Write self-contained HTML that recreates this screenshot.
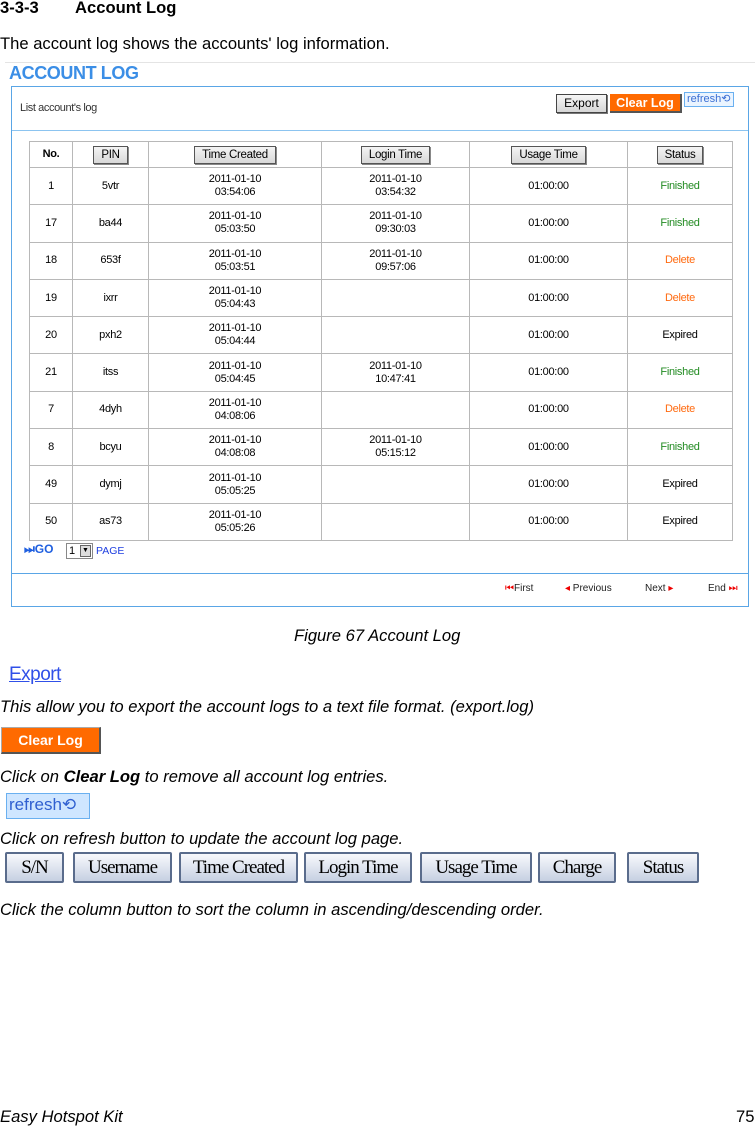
<!DOCTYPE html>
<html><head><meta charset="utf-8"><style>
*{margin:0;padding:0;box-sizing:border-box}
body{width:755px;height:1127px;background:#fff;font-family:"Liberation Sans",sans-serif;position:relative;overflow:hidden;color:#000}
.a{position:absolute;white-space:nowrap}
.it{font-style:italic;font-size:16.6px}
table{border-collapse:collapse;position:absolute;left:29px;top:141px;width:704px;font-size:11px;font-family:"Liberation Sans",sans-serif}
td{border:1px solid #b8b8b8;text-align:center;height:37.3px;line-height:13px;letter-spacing:-0.3px}
tr.h td{height:26px}
.b{display:inline-block;border:1px solid #555;background:linear-gradient(#f4f4f4,#d8d8d8);padding:1px 7px;font-size:11.5px;line-height:14px;box-shadow:1px 1px 0 #888}
.g{color:#228b22}.o{color:#ff6a10}
.sb{display:inline-block;position:absolute;top:852px;height:31px;border:2px solid #5a6c8c;border-radius:2px;background:linear-gradient(#f8f9fc,#c6d0e2);font-family:"Liberation Serif",serif;font-size:19px;line-height:27px;text-align:center;letter-spacing:-1px}
</style></head><body>
<div class="a" style="left:0;top:-2px;font-weight:bold;font-size:16.6px">3-3-3</div>
<div class="a" style="left:75px;top:-2px;font-weight:bold;font-size:16.6px">Account Log</div>
<div class="a" style="left:0;top:34px;font-size:16.6px">The account log shows the accounts' log information.</div>
<div class="a" style="left:5px;top:62px;width:750px;height:1px;background:#e4e4e4"></div>
<div class="a" style="left:9px;top:63px;font-weight:bold;font-size:18px;color:#3b8ee6;letter-spacing:-0.4px">ACCOUNT LOG</div>
<div class="a" style="left:11px;top:86px;width:738px;height:521px;border:1px solid #5aa6e6"></div>
<div class="a" style="left:12px;top:130px;width:736px;height:1px;background:#8cc4f0"></div>
<div class="a" style="left:12px;top:573px;width:736px;height:1px;background:#5aa6e6"></div>
<div class="a" style="left:20px;top:102px;font-size:11px;color:#333;letter-spacing:-0.4px">List account's log</div>
<div class="a" style="left:556px;top:94px;width:51px;height:19px;border:1px solid #444;background:linear-gradient(#f6f6f6,#d6d6d6);font-size:12px;line-height:17px;text-align:center;box-shadow:1px 1px 0 #777">Export</div>
<div class="a" style="left:610px;top:94px;width:72px;height:19px;background:#ff6a00;border-right:2px solid #555;border-bottom:2px solid #555;color:#fff;font-size:12.5px;line-height:18px;text-align:center;font-weight:bold">Clear Log</div>
<div class="a" style="left:684px;top:92px;width:50px;height:15px;border:1px solid #6ab0f0;background:#eaf4ff;color:#3b6fd4;font-size:11px;line-height:13px;padding-left:2px">refresh⟲</div>
<table>
<tr class="h"><td style="width:43px;font-weight:bold">No.</td><td style="width:76px"><span class="b">PIN</span></td><td style="width:173px"><span class="b">Time Created</span></td><td style="width:148px"><span class="b">Login Time</span></td><td style="width:158px"><span class="b">Usage Time</span></td><td><span class="b">Status</span></td></tr>
<tr><td>1</td><td>5vtr</td><td>2011-01-10<br>03:54:06</td><td>2011-01-10<br>03:54:32</td><td>01:00:00</td><td class="g">Finished</td></tr>
<tr><td>17</td><td>ba44</td><td>2011-01-10<br>05:03:50</td><td>2011-01-10<br>09:30:03</td><td>01:00:00</td><td class="g">Finished</td></tr>
<tr><td>18</td><td>653f</td><td>2011-01-10<br>05:03:51</td><td>2011-01-10<br>09:57:06</td><td>01:00:00</td><td class="o">Delete</td></tr>
<tr><td>19</td><td>ixrr</td><td>2011-01-10<br>05:04:43</td><td></td><td>01:00:00</td><td class="o">Delete</td></tr>
<tr><td>20</td><td>pxh2</td><td>2011-01-10<br>05:04:44</td><td></td><td>01:00:00</td><td>Expired</td></tr>
<tr><td>21</td><td>itss</td><td>2011-01-10<br>05:04:45</td><td>2011-01-10<br>10:47:41</td><td>01:00:00</td><td class="g">Finished</td></tr>
<tr><td>7</td><td>4dyh</td><td>2011-01-10<br>04:08:06</td><td></td><td>01:00:00</td><td class="o">Delete</td></tr>
<tr><td>8</td><td>bcyu</td><td>2011-01-10<br>04:08:08</td><td>2011-01-10<br>05:15:12</td><td>01:00:00</td><td class="g">Finished</td></tr>
<tr><td>49</td><td>dymj</td><td>2011-01-10<br>05:05:25</td><td></td><td>01:00:00</td><td>Expired</td></tr>
<tr><td>50</td><td>as73</td><td>2011-01-10<br>05:05:26</td><td></td><td>01:00:00</td><td>Expired</td></tr>
</table>
<div class="a" style="left:24px;top:542px;font-weight:bold;font-size:12px;color:#2060e0">⏭GO</div>
<div class="a" style="left:66px;top:543px;width:27px;height:16px;border:1px solid #888;font-size:11px;line-height:14px;padding-left:2px">1<span style="position:absolute;right:1px;top:1px;width:11px;height:12px;background:#ddd;border:1px solid #666;font-size:7px;line-height:10px;text-align:center">▼</span></div>
<div class="a" style="left:96px;top:545px;font-size:10.5px;color:#2040e0">PAGE</div>
<div class="a" style="left:505px;top:583px;font-size:10px;color:#222"><span style="color:#e00">⏮</span>First</div>
<div class="a" style="left:565px;top:583px;font-size:10px;color:#222"><span style="color:#e00">◂</span> Previous</div>
<div class="a" style="left:645px;top:583px;font-size:10px;color:#222">Next <span style="color:#e00">▸</span></div>
<div class="a" style="left:708px;top:583px;font-size:10px;color:#222">End <span style="color:#e00">⏭</span></div>
<div class="a it" style="left:294px;top:626px">Figure 67 Account Log</div>
<div class="a" style="left:9px;top:664px;font-size:19px;color:#3050e8;text-decoration:underline;letter-spacing:-0.5px">Export</div>
<div class="a it" style="left:0;top:697px">This allow you to export the account logs to a text file format. (export.log)</div>
<div class="a" style="left:1px;top:727px;width:100px;height:27px;background:#ff6a00;border-right:2px solid #555;border-bottom:2px solid #555;border-top:1px solid #aaa;border-left:1px solid #aaa;color:#fff;font-weight:bold;font-size:14px;line-height:24px;text-align:center">Clear Log</div>
<div class="a it" style="left:0;top:767px">Click on <b>Clear Log</b> to remove all account log entries.</div>
<div class="a" style="left:6px;top:793px;height:26px;border:1px solid #6ab0f0;background:#cfe6ff;color:#3060d0;font-size:17px;line-height:22px;padding-left:2px;width:84px">refresh⟲</div>
<div class="a it" style="left:0;top:829px">Click on refresh button to update the account log page.</div>
<div class="sb" style="left:5px;width:59px">S/N</div>
<div class="sb" style="left:73px;width:99px">Username</div>
<div class="sb" style="left:179px;width:119px">Time Created</div>
<div class="sb" style="left:304px;width:108px">Login Time</div>
<div class="sb" style="left:420px;width:112px">Usage Time</div>
<div class="sb" style="left:538px;width:78px">Charge</div>
<div class="sb" style="left:627px;width:72px">Status</div>
<div class="a it" style="left:0;top:900px">Click the column button to sort the column in ascending/descending order.</div>
<div class="a it" style="left:0;top:1107px">Easy Hotspot Kit</div>
<div class="a" style="left:736px;top:1107px;font-size:16.6px">75</div>
</body></html>
